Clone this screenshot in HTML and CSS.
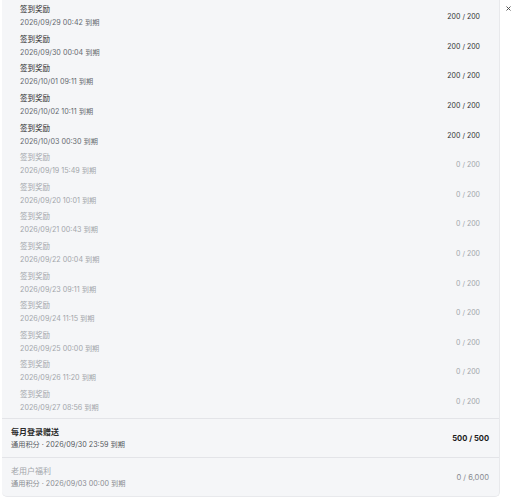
FILE: index.html
```html
<!DOCTYPE html>
<html lang="zh-CN">
<head>
<meta charset="UTF-8">
<meta name="viewport" content="width=device-width, initial-scale=1">
<title>积分明细</title>
<link rel="stylesheet" href="styles.css">
</head>
<body>
<div class="page">
  <div class="panel">
    <div class="sub-list">
      <div class="item"><div class="info"><div class="title">签到奖励</div><div class="date">2026/09/29 00:42 到期</div></div><div class="value">200 / 200</div></div>
      <div class="item"><div class="info"><div class="title">签到奖励</div><div class="date">2026/09/30 00:04 到期</div></div><div class="value">200 / 200</div></div>
      <div class="item"><div class="info"><div class="title">签到奖励</div><div class="date">2026/10/01 09:11 到期</div></div><div class="value">200 / 200</div></div>
      <div class="item"><div class="info"><div class="title">签到奖励</div><div class="date">2026/10/02 10:11 到期</div></div><div class="value">200 / 200</div></div>
      <div class="item"><div class="info"><div class="title">签到奖励</div><div class="date">2026/10/03 00:30 到期</div></div><div class="value">200 / 200</div></div>
      <div class="item used"><div class="info"><div class="title">签到奖励</div><div class="date">2026/09/19 15:49 到期</div></div><div class="value">0 / 200</div></div>
      <div class="item used"><div class="info"><div class="title">签到奖励</div><div class="date">2026/09/20 10:01 到期</div></div><div class="value">0 / 200</div></div>
      <div class="item used"><div class="info"><div class="title">签到奖励</div><div class="date">2026/09/21 00:43 到期</div></div><div class="value">0 / 200</div></div>
      <div class="item used"><div class="info"><div class="title">签到奖励</div><div class="date">2026/09/22 00:04 到期</div></div><div class="value">0 / 200</div></div>
      <div class="item used"><div class="info"><div class="title">签到奖励</div><div class="date">2026/09/23 09:11 到期</div></div><div class="value">0 / 200</div></div>
      <div class="item used"><div class="info"><div class="title">签到奖励</div><div class="date">2026/09/24 11:15 到期</div></div><div class="value">0 / 200</div></div>
      <div class="item used"><div class="info"><div class="title">签到奖励</div><div class="date">2026/09/25 00:00 到期</div></div><div class="value">0 / 200</div></div>
      <div class="item used"><div class="info"><div class="title">签到奖励</div><div class="date">2026/09/26 11:20 到期</div></div><div class="value">0 / 200</div></div>
      <div class="item used"><div class="info"><div class="title">签到奖励</div><div class="date">2026/09/27 08:56 到期</div></div><div class="value">0 / 200</div></div>
    </div>
    <div class="group">
      <div class="info"><div class="title">每月登录赠送</div><div class="date">通用积分 · 2026/09/30 23:59 到期</div></div>
      <div class="value">500 / 500</div>
    </div>
    <div class="group used">
      <div class="info"><div class="title">老用户福利</div><div class="date">通用积分 · 2026/09/03 00:00 到期</div></div>
      <div class="value">0 / 6,000</div>
    </div>
  </div>
  <div class="side">
    <svg class="close" width="5" height="5" viewBox="0 0 5 5"><path d="M0.5 0.5 L4.5 4.5 M4.5 0.5 L0.5 4.5" stroke="#444" stroke-width="0.9" fill="none"/></svg>
  </div>
</div>
</body>
</html>
```
FILE: styles.css
```css
body {
  margin: 0;
  background: #ffffff;
  font-family: Inter, "Noto Sans CJK SC", sans-serif;
  color: #1f1f1f;
}
.page {
  display: flex;
  align-items: flex-start;
  padding-left: 2px;
}
.panel {
  width: 498px;
  background: #f5f6f8;
  border-right: 1px solid #e8e9ec;
  border-bottom: 1px solid #e8e9ec;
  border-radius: 0 0 5px 5px;
}
.sub-list {
  padding: 0 19px 4px 18px;
}
.item {
  display: flex;
  justify-content: space-between;
  align-items: center;
  height: 29.6px;
  box-sizing: border-box;
  padding-top: 4px;
}
.title {
  font-size: 7.5px;
  line-height: 12px;
  color: #2a2a2a;
}
.date {
  font-size: 7.2px;
  line-height: 12px;
  margin-top: 1px;
  color: #666a70;
}
.value {
  font-size: 7px;
  color: #333333;
}
.item.used .title,
.item.used .date,
.item.used .value {
  color: #a3a6ab;
}
.group {
  display: flex;
  justify-content: space-between;
  align-items: center;
  border-top: 1px solid #e3e4e8;
  padding: 7px 10px 6px 9px;
}
.group .title {
  font-weight: bold;
  font-size: 8px;
}
.group .date {
  margin-top: 1px;
  color: #555a60;
}
.group .value {
  font-weight: bold;
  font-size: 7.6px;
  color: #1a1a1a;
}
.group.used .title {
  font-weight: normal;
  color: #a3a6ab;
}
.group.used .date {
  color: #8a8d92;
}
.group.used .value {
  font-weight: normal;
  color: #8a8d92;
}
.side {
  padding: 6px 0 0 6px;
}
.close {
  display: block;
}
```
